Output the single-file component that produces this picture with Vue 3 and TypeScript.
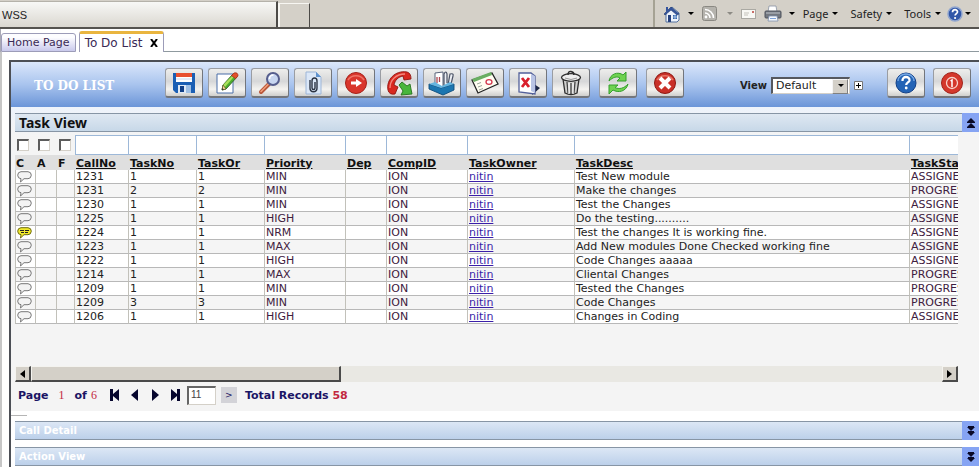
<script setup lang="ts">
import { ref } from 'vue'

interface Column {
  label: string
  width: number
}

interface Task {
  call: number
  task: number
  order: number
  priority: string
  desc: string
  status: string
  noted?: boolean
}

const flags = ['C', 'A', 'F']
const flagWidths = [21, 21, 18]

const columns: Column[] = [
  { label: 'CallNo', width: 54 },
  { label: 'TaskNo', width: 68 },
  { label: 'TaskOr', width: 68 },
  { label: 'Priority', width: 81 },
  { label: 'Dep', width: 41 },
  { label: 'CompID', width: 81 },
  { label: 'TaskOwner', width: 107 },
  { label: 'TaskDesc', width: 335 },
  { label: 'TaskStatus', width: 100 },
]

const tasks: Task[] = [
  { call: 1231, task: 1, order: 1, priority: 'MIN', desc: 'Test New module', status: 'ASSIGNED' },
  { call: 1231, task: 2, order: 2, priority: 'MIN', desc: 'Make the changes', status: 'PROGRESS' },
  { call: 1230, task: 1, order: 1, priority: 'MIN', desc: 'Test the Changes', status: 'ASSIGNED' },
  { call: 1225, task: 1, order: 1, priority: 'HIGH', desc: 'Do the testing..........', status: 'ASSIGNED' },
  { call: 1224, task: 1, order: 1, priority: 'NRM', desc: 'Test the changes It is working fine.', status: 'ASSIGNED', noted: true },
  { call: 1223, task: 1, order: 1, priority: 'MAX', desc: 'Add New modules Done Checked working fine', status: 'ASSIGNED' },
  { call: 1222, task: 1, order: 1, priority: 'HIGH', desc: 'Code Changes aaaaa', status: 'ASSIGNED' },
  { call: 1214, task: 1, order: 1, priority: 'MAX', desc: 'Cliental Changes', status: 'PROGRESS' },
  { call: 1209, task: 1, order: 1, priority: 'MIN', desc: 'Tested the Changes', status: 'PROGRESS' },
  { call: 1209, task: 3, order: 3, priority: 'MIN', desc: 'Code Changes', status: 'PROGRESS' },
  { call: 1206, task: 1, order: 1, priority: 'HIGH', desc: 'Changes in Coding', status: 'ASSIGNED' },
]

const pageSize = ref('11')
</script>

<template>
  <div class="page">
    <header class="chrome">
      <div class="browser-tab">WSS</div>
      <button class="new-tab" aria-label="New tab"></button>
      <nav class="commands">
        <button class="cmd home" aria-label="Home">
          <svg width="18" height="18" viewBox="0 0 18 18">
            <path d="M3 8v9h11l2-2V8L9 2z" fill="#eef3fb" stroke="#52709f" />
            <path d="M1 9l7-7 8 7-2 1-6-5-6 5z" fill="#34549e" stroke="#20396f" stroke-width=".6" />
            <path d="M3 2h2v3l-2 2z" fill="#34549e" />
            <path d="M5 10h3v7H5z" fill="#27427f" />
            <path d="M10 10h4v4h-4z" fill="#3667ad" />
            <path d="M12 10v4M10 12h4" stroke="#cfe0f8" stroke-width=".7" />
          </svg>
          <i class="caret"></i>
        </button>
        <button class="cmd feed" aria-label="Feeds">
          <svg width="15" height="15" viewBox="0 0 15 15">
            <rect x=".5" y=".5" width="14" height="14" rx="2" fill="#b5b3ad" stroke="#8a8882" />
            <circle cx="4" cy="11" r="1.4" fill="#fff" />
            <path d="M3 7a5 5 0 0 1 5 5M3 3.500a8.500 8.500 0 0 1 8.500 8.500" fill="none" stroke="#fff" stroke-width="1.600" />
          </svg>
          <i class="caret dim"></i>
        </button>
        <button class="cmd mail" aria-label="Read mail">
          <svg width="15" height="12" viewBox="0 0 15 12">
            <rect x=".5" y="1.500" width="14" height="9" fill="#f8f8f4" stroke="#aaa9a3" />
            <path d="M3 5h5M3 7h4" stroke="#c4c2bb" />
            <rect x="11" y="3" width="2" height="2" fill="#c96e68" />
          </svg>
        </button>
        <button class="cmd print" aria-label="Print">
          <svg width="18" height="17" viewBox="0 0 18 17">
            <path d="M5 1h7l1 6H4z" fill="#fff" stroke="#8993a3" stroke-width=".8" />
            <rect x="1" y="6" width="16" height="7" rx="1" fill="#737880" stroke="#4e535c" />
            <path d="M2 8h14" stroke="#bfc3ca" />
            <path d="M5 11h8l1 5H4z" fill="#f5f8fd" stroke="#7d8fac" stroke-width=".8" />
            <path d="M6 13.500h6" stroke="#7fa5dc" />
          </svg>
          <i class="caret"></i>
        </button>
        <button class="cmd text">Page <i class="caret"></i></button>
        <button class="cmd text">Safety <i class="caret"></i></button>
        <button class="cmd text">Tools <i class="caret"></i></button>
        <button class="cmd about" aria-label="Help">
          <svg width="16" height="16" viewBox="0 0 16 16">
            <circle cx="8" cy="8" r="7" fill="#3157a8" stroke="#91a6cf" stroke-width="1.500" />
            <path d="M5.500 6.300C5.500 2.800 10.700 3 10.500 6c-.1 1.500-2.400 1.700-2.400 3.600" fill="none" stroke="#fff" stroke-width="1.700" />
            <circle cx="8.100" cy="12" r="1.100" fill="#fff" />
          </svg>
          <i class="caret"></i>
        </button>
      </nav>
    </header>

    <nav class="tabs">
      <a class="tab" href="#home">Home Page</a>
      <div class="tab active">
        <a href="#todo">To Do List</a>
        <button class="tab-close" aria-label="Close tab">
          <svg width="8" height="8" viewBox="0 0 8 8"><path d="M1 0l6 8M7 0L1 8" stroke="#000" stroke-width="2" /></svg>
        </button>
      </div>
      <div class="tab-rest"></div>
    </nav>

    <div class="body">
      <main class="frame">
        <div class="banner">
          <h1>TO DO LIST</h1>
          <div class="tools">
            <button class="tool" aria-label="Save">
              <svg viewBox="0 0 24 24">
                <path d="M1 2h22v20H4l-3-3z" fill="#1b5fb4" />
                <path d="M4 2h16v9H4z" fill="#fff" />
                <path d="M4 2h16v4H4z" fill="#e8502f" />
                <path d="M4 8h16" stroke="#c9d8ee" />
                <path d="M6 14h13v8H6z" fill="#dfe9f5" />
                <path d="M8 15h4v6H8z" fill="#123f86" />
                <path d="M14 14h5v8h-5z" fill="#9fbfe4" />
              </svg>
            </button>
            <button class="tool" aria-label="Edit">
              <svg viewBox="0 0 24 24">
                <path d="M2 3h16v19H2z" fill="#fff" stroke="#4b6ea8" />
                <path d="M7 19l1-5L18 3l4 3-11 12z" fill="#4caf2e" stroke="#2f5f21" stroke-width=".9" />
                <path d="M8 14l11-11 1.500 1L10 16z" fill="#a9df5b" />
                <path d="M16.500 4.500L19 2q4-1 4 3l-2.500 2.700z" fill="#e2502b" stroke="#a33017" stroke-width=".8" />
                <path d="M7 19l1-5 3 4z" fill="#f5d69a" stroke="#5d4a20" stroke-width=".6" />
                <path d="M7 19l.5-2 1.300 1.400z" fill="#222" />
              </svg>
            </button>
            <button class="tool" aria-label="Search">
              <svg viewBox="0 0 24 24">
                <path d="M11 13l-8 8" stroke="#b95639" stroke-width="4" stroke-linecap="round" />
                <path d="M11 12.500l-8 8" stroke="#f2a07c" stroke-width="1.500" stroke-linecap="round" />
                <circle cx="15" cy="8" r="6" fill="#c8d6f0" stroke="#565e8d" stroke-width="2" />
                <path d="M11.500 8a4 4 0 0 1 4-4" fill="none" stroke="#fff" stroke-width="1.600" />
              </svg>
            </button>
            <button class="tool" aria-label="Attach">
              <svg viewBox="0 0 24 24">
                <path d="M5 1h10l5 5v17H5z" fill="#dbe7f7" stroke="#9db6d8" />
                <path d="M15 1v5h5z" fill="#5f93cf" />
                <path d="M9 9v8c0 5 7 5 7 0V10c0-4-5-4-5 0v7c0 2 3 2 3 0v-6" fill="none" stroke="#2b3342" stroke-width="1.400" />
              </svg>
            </button>
            <button class="tool" aria-label="Forward">
              <svg viewBox="0 0 24 24">
                <circle cx="12" cy="12" r="10.500" fill="#d9362c" stroke="#a52119" />
                <path d="M4 9a9 8 0 0 1 16 0" fill="none" stroke="#ef7466" stroke-width="1.500" />
                <path d="M7 10.500h5V8l6 4-6 4v-2.500H7z" fill="#fff" />
              </svg>
            </button>
            <button class="tool" aria-label="Call back">
              <svg viewBox="0 0 24 24">
                <path d="M1 19C-1 9 8-1 20 1q4 1 4 7l-7 1-1-4C11 6 8 9 7 14l4 2-3 7q-6 1-7-4z" fill="#d8291f" stroke="#8f1510" stroke-width=".9" />
                <path d="M3 17C3 9 9 3 18 3" fill="none" stroke="#f5887c" stroke-width="1.300" />
                <path d="M12 14l3-3 5 4 3-2 2 10-11 1 2-4z" fill="#48b63c" stroke="#25731e" stroke-width=".9" />
              </svg>
            </button>
            <button class="tool" aria-label="Documents">
              <svg viewBox="0 0 24 24">
                <path d="M5 2l8-1v15H5z" fill="#fff" stroke="#59647b" />
                <path d="M7 6v6M9.500 6v5" stroke="#b0464f" stroke-width="1.300" />
                <path d="M14 15V3q2-4 3 0v9M18 14l2-11q4-1 3 2l-2 8" fill="#eceff4" stroke="#4b5366" stroke-width="1.200" />
                <path d="M-1 13l12 4 13-4v6l-11 5-14-6z" fill="#1c76b0" stroke="#104d7c" stroke-width=".9" />
                <path d="M-1 13l6-2 7 4 8-4 4 2-13 4z" fill="#67b5df" />
              </svg>
            </button>
            <button class="tool" aria-label="Card">
              <svg viewBox="0 0 24 24">
                <path d="M-1 9L19 2l6 11L5 22z" fill="#fffef2" stroke="#222" stroke-width="1.300" />
                <path d="M-1 8L18 1l1 3L1 11z" fill="#69ae62" />
                <path d="M4 13l4-1.500M5 16l4-1.500M6 19l4-1.500" stroke="#9aa39a" />
                <ellipse cx="16" cy="11" rx="3" ry="2.300" fill="#fff" stroke="#d3384d" stroke-width="1.300" />
              </svg>
            </button>
            <button class="tool" aria-label="Delete page">
              <svg viewBox="0 0 24 24">
                <path d="M18 13l6 4-8 7z" fill="#1d2745" />
                <path d="M3 2h12l4 3v18L3 21z" fill="#fff" stroke="#53609a" stroke-width="1.300" />
                <path d="M15 3l4 2v17l-4-2z" fill="#b9c4e5" />
                <path d="M6 7l7 9M13 7L6 16" stroke="#d91f2c" stroke-width="2.800" />
              </svg>
            </button>
            <button class="tool" aria-label="Trash">
              <svg viewBox="0 0 24 24">
                <path d="M4 8l2 14q6 3 12 0l2-14z" fill="#d0d0ce" stroke="#2e2e2e" stroke-width="1.300" />
                <path d="M8 11l1 11M12 12v11M16 11l-1 11" stroke="#444" stroke-width="1.300" />
                <path d="M10 12v11M14 12v11" stroke="#fff" />
                <ellipse cx="12" cy="6.500" rx="9.500" ry="3.800" fill="#eee" stroke="#2e2e2e" stroke-width="1.300" />
                <path d="M6 7q6 3 12 0" fill="none" stroke="#999" />
                <path d="M9 4q0-4 3-3.500T15 4" fill="none" stroke="#2e2e2e" stroke-width="1.500" />
              </svg>
            </button>
            <button class="tool wide" aria-label="Refresh">
              <svg viewBox="0 0 24 24">
                <path d="M3 10C4 3 12 0 17 4l3-3v9h-9l3-3c-3-2-7-1-11 3z" fill="#6fd251" stroke="#349f2d" />
                <path d="M22 13c-2 8-10 9-15 6l-4 4v-9h9l-3 2.500c4 2 9 1 13-3.500z" fill="#6fd251" stroke="#349f2d" />
              </svg>
            </button>
            <button class="tool wide" aria-label="Close">
              <svg viewBox="0 0 24 24">
                <circle cx="12" cy="12" r="10.500" fill="#c93028" stroke="#8e1913" />
                <path d="M4 9a9 8 0 0 1 16 0" fill="none" stroke="#e87466" stroke-width="1.500" />
                <path d="M7 7l10 10M17 7L7 17" stroke="#fff" stroke-width="4" />
              </svg>
            </button>
          </div>
          <div class="view">
            <label for="view">View</label>
            <span class="select-box">
              <select id="view"><option>Default</option></select>
            </span>
            <button class="plus" aria-label="Add view">
              <svg width="9" height="9" viewBox="0 0 9 9"><path d="M.5.5h8v8h-8z" fill="#fff" stroke="#777" /><path d="M2 4.500h5M4.500 2v5" stroke="#000" /></svg>
            </button>
          </div>
          <div class="session">
            <button class="tool" aria-label="Help">
              <svg viewBox="0 0 24 24">
                <circle cx="12" cy="12" r="10" fill="#2464b6" stroke="#133f85" />
                <path d="M4 10a8 7 0 0 1 16 0" fill="none" stroke="#76a8e4" stroke-width="1.500" />
                <path d="M8.500 10C8 4.500 16 5 15.500 9.500c-.3 2-3.300 2-3.300 4.500" fill="none" stroke="#fff" stroke-width="2.300" />
                <circle cx="12.200" cy="17" r="1.400" fill="#fff" />
              </svg>
            </button>
            <button class="tool" aria-label="Log out">
              <svg viewBox="0 0 24 24">
                <circle cx="12" cy="12" r="10.500" fill="#d4382c" stroke="#a0241b" />
                <circle cx="12" cy="12" r="5.500" fill="none" stroke="#f8d4cc" stroke-width="1.300" />
                <path d="M10.500 10l1.500-1v7" fill="none" stroke="#fff" stroke-width="1.500" />
              </svg>
            </button>
          </div>
        </div>

        <section class="task-view">
          <div class="bar">
            <h2>Task View</h2>
            <button class="toggle" aria-label="Collapse Task View">
              <svg width="8" height="10" viewBox="0 0 8 10"><path d="M4 0l4 4v1H0V4zM4 5l4 4v1H0V9z" fill="#0a0a28" /></svg>
            </button>
          </div>

          <div class="panel">
            <div class="grid">
              <table>
                <colgroup>
                  <col v-for="(w, i) in flagWidths" :key="'f' + i" :style="{ width: w + 'px' }" />
                  <col v-for="c in columns" :key="c.label" :style="{ width: c.width + 'px' }" />
                </colgroup>
                <thead>
                  <tr class="filters">
                    <td v-for="f in flags" :key="f" class="flag"><input type="checkbox" :aria-label="'Filter ' + f" /></td>
                    <td v-for="c in columns" :key="c.label"><input type="text" :aria-label="'Filter ' + c.label" /></td>
                  </tr>
                  <tr class="heads">
                    <th v-for="f in flags" :key="f" scope="col">{{ f }}</th>
                    <th v-for="c in columns" :key="c.label" scope="col"><a href="#sort">{{ c.label }}</a></th>
                  </tr>
                </thead>
                <tbody>
                  <tr v-for="(t, i) in tasks" :key="i">
                    <td class="mark">
                      <svg class="bubble" :class="{ noted: t.noted }" width="15" height="12" viewBox="0 0 15 12">
                        <path d="M4 .7h7Q14.300 1 14.300 4.200 14 7.700 11 7.700H7L3.500 11l.5-3.300Q.7 7.500.7 4.200.7 1 4 .7z" />
                        <path v-if="t.noted" class="lines" d="M3 3.500h4M8 3.500h4M4 5.500h3M8 5.500h3" />
                      </svg>
                    </td>
                    <td></td>
                    <td></td>
                    <td>{{ t.call }}</td>
                    <td>{{ t.task }}</td>
                    <td>{{ t.order }}</td>
                    <td class="plum">{{ t.priority }}</td>
                    <td></td>
                    <td class="plum">ION</td>
                    <td><a class="owner" href="#nitin">nitin</a></td>
                    <td>{{ t.desc }}</td>
                    <td class="plum">{{ t.status }}</td>
                  </tr>
                </tbody>
              </table>
            </div>

            <div class="scroller">
              <button class="arrow" aria-label="Scroll left"><svg width="5" height="8" viewBox="0 0 5 8"><path d="M5 0v8L0 4z" /></svg></button>
              <div class="track"><div class="thumb"></div></div>
              <button class="arrow" aria-label="Scroll right"><svg width="5" height="8" viewBox="0 0 5 8"><path d="M0 0v8l5-4z" /></svg></button>
            </div>

            <div class="pager">
              <span class="page-label">Page</span>
              <span class="num">1</span>
              <span class="of">of</span>
              <span class="num last">6</span>
              <div class="moves">
                <button aria-label="First page"><svg viewBox="0 0 10 12"><path d="M0 0h3v5l6-5v12L3 7v5H0z" /></svg></button>
                <button aria-label="Previous page"><svg viewBox="0 0 10 12"><path d="M8 0v12L1 6z" /></svg></button>
                <button aria-label="Next page"><svg viewBox="0 0 10 12"><path d="M2 0v12l7-6z" /></svg></button>
                <button aria-label="Last page"><svg viewBox="0 0 10 12"><path d="M10 0H7v5L1 0v12l6-5v5h3z" /></svg></button>
              </div>
              <input v-model="pageSize" class="size" type="text" aria-label="Records per page" />
              <button class="go">&gt;</button>
              <span class="total">Total Records <b>58</b></span>
            </div>
          </div>
        </section>

        <hr class="stub" />

        <section class="bar closed">
          <h2>Call Detail</h2>
          <button class="toggle" aria-label="Expand Call Detail">
            <svg width="8" height="10" viewBox="0 0 8 10"><path d="M1 0h6v1h1L4 5 0 1h1zM1 5h6v1h1l-4 4-4-4h1z" fill="#0a0a28" /></svg>
          </button>
        </section>
        <section class="bar closed">
          <h2>Action View</h2>
          <button class="toggle" aria-label="Expand Action View">
            <svg width="8" height="10" viewBox="0 0 8 10"><path d="M1 0h6v1h1L4 5 0 1h1zM1 5h6v1h1l-4 4-4-4h1z" fill="#0a0a28" /></svg>
          </button>
        </section>
      </main>
    </div>
  </div>
</template>

<style>
body {
  background: #fff;
  overflow: hidden;
}
</style>

<style scoped>
.page {
  display: flex;
  flex-direction: column;
  height: 100vh;
  overflow: hidden;
  font-family: 'DejaVu Sans', Verdana, sans-serif;
  font-size: 11px;
  color: #222;
}
.page * {
  box-sizing: border-box;
}
button {
  padding: 0;
  border: 0;
  background: none;
  font: inherit;
  color: inherit;
}
h1,
h2 {
  margin: 0;
}
svg {
  display: block;
  flex: none;
}

/* browser chrome */
.chrome {
  display: flex;
  flex: none;
  height: 29px;
  background: #d4d0c8;
  border-bottom: 2px solid #55534f;
  font-family: 'Liberation Sans', Arial, sans-serif;
}
.browser-tab {
  flex: none;
  width: 278px;
  margin-top: 1px;
  padding-left: 2px;
  line-height: 27px;
  background: linear-gradient(#f8f8f6, #dad7d0);
  border-top: 1px solid #b5b2aa;
  border-right: 2px solid #4c4a47;
}
.new-tab {
  width: 32px;
  margin-top: 3px;
  border-top: 1px solid #f7f6f2;
  border-left: 2px solid #f7f6f2;
  border-right: 1px solid #4c4a47;
}
.commands {
  display: flex;
  align-items: center;
  margin-left: auto;
  padding: 0 8px;
  border-left: 2px solid #a5a294;
  font-family: 'Noto Sans', Tahoma, sans-serif;
}
.cmd {
  display: flex;
  align-items: center;
}
.home,
.feed,
.print {
  gap: 7px;
  margin-right: 8px;
}
.feed {
  gap: 10px;
}
.mail {
  margin-right: 8px;
}
.text {
  gap: 4px;
  margin-right: 12px;
}
.text:nth-last-child(2) {
  margin-right: 6px;
}
.about {
  gap: 2px;
}
.caret {
  border: 3px solid transparent;
  border-top-color: #000;
  border-bottom: 0;
}
.caret.dim {
  border-top-color: #8c8a84;
}

/* application tabs */
.tabs {
  display: flex;
  flex: none;
  align-items: flex-end;
  height: 23px;
  border-left: 1px solid #a9a9b5;
}
.tabs a {
  color: #3a2a55;
  text-decoration: none;
}
.tab {
  height: 19px;
  padding: 0 5px;
  line-height: 18px;
  background: linear-gradient(#fdfdff 20%, #c9c9ec);
  border: 1px solid #9c9cb8;
  border-radius: 3px 3px 0 0;
}
.tab.active {
  display: flex;
  align-items: center;
  gap: 8px;
  height: 21px;
  margin-left: 3px;
  padding: 0 5px;
  background: #fff;
  border-top: 3px solid #e9b53f;
  border-bottom: 0;
  font-size: 12px;
}
.tab-rest {
  flex: 1;
  height: 1px;
  background: #8f9a9f;
}

/* main frame */
.body {
  display: flex;
  flex: 1;
  min-height: 0;
  padding: 8px 0 0 7px;
  border-left: 2px solid #c6c6c6;
}
.frame {
  flex: 1;
  min-width: 0;
  border-top: 2px solid #4c4f55;
  border-left: 2px solid #4c4f55;
}
.banner {
  display: flex;
  align-items: center;
  height: 45px;
  padding: 0 8px 3px 23px;
  background: linear-gradient(#dbe7fb, #a9c4ee 50%, #6b95d8);
}
h1 {
  flex: none;
  width: 131px;
  padding-top: 6px;
  font: bold 12px 'DejaVu Serif', serif;
  color: #fff;
}
.tools {
  display: flex;
  gap: 5px;
}
.tool {
  display: flex;
  align-items: center;
  justify-content: center;
  width: 38px;
  height: 30px;
  background: linear-gradient(#eeeeec, #d6d7d8 45%, #f4f3f0 75%, #cfcfcd);
  border: 1px solid #9a9da3;
  border-right-color: #73767c;
  border-bottom: 2px solid #73767c;
  border-radius: 3px;
}
.tool svg {
  width: 24px;
  height: 24px;
  overflow: visible;
}
.tool.wide {
  margin-left: 4px;
}
.view {
  display: flex;
  align-items: center;
  gap: 4px;
  margin: 5px 24px 0 auto;
}
.view label {
  font-weight: bold;
  font-size: 10px;
}
.select-box {
  position: relative;
  display: block;
}
.select-box::before {
  content: '';
  position: absolute;
  right: 2px;
  top: 2px;
  width: 14px;
  height: 13px;
  background: #d4d0c8;
  border: 1px solid #808080;
  border-top-color: #f5f5f5;
  border-left-color: #f5f5f5;
  pointer-events: none;
}
.select-box::after {
  content: '';
  position: absolute;
  right: 6px;
  top: 7px;
  border: 3px solid transparent;
  border-top-color: #000;
  border-bottom: 0;
  pointer-events: none;
}
select {
  display: block;
  appearance: none;
  width: 79px;
  height: 17px;
  padding: 0 3px;
  background: #fff;
  border: 1px solid #d4d0c8;
  border-top: 2px solid #55585e;
  border-left: 2px solid #55585e;
  border-radius: 0;
  font: 11px/14px 'DejaVu Sans', Verdana, sans-serif;
  color: #222;
}
.session {
  display: flex;
  gap: 8px;
}

/* section bars */
.bar {
  display: flex;
  height: 19px;
  background: linear-gradient(#dfe8f2, #c7d8e8);
  border-top: 1px solid #8795a5;
  border-bottom: 1px solid #8795a5;
}
.bar h2 {
  flex: 1;
  padding-left: 4px;
  font: bold 14px/17px 'Noto Sans', 'Trebuchet MS', sans-serif;
  color: #111;
}
.toggle {
  display: flex;
  align-items: center;
  justify-content: center;
  width: 17px;
  height: 19px;
  margin: -1px 0;
  background: #86a4f3;
}
.bar.closed {
  margin: 0 0 7px 4px;
  background: linear-gradient(#dce7f5, #bcd0ea);
}
.bar.closed h2 {
  font: bold 10px/17px 'DejaVu Sans', Verdana, sans-serif;
  color: #fff;
}
.task-view {
  padding: 6px 0 0 4px;
  background: linear-gradient(#eef3fb, #f4f4f4 30px);
}

/* task grid */
.panel {
  padding-top: 3px;
}
.grid {
  height: 231px;
  margin-right: 21px;
  overflow: hidden;
}
table {
  table-layout: fixed;
  width: 995px;
  border-collapse: separate;
  border-spacing: 0;
}
td,
th {
  height: 14px;
  padding: 0;
  overflow: hidden;
  line-height: 13px;
  text-align: left;
  white-space: nowrap;
}
.filters td {
  height: 20px;
}
.filters input[type='text'] {
  display: block;
  width: 100%;
  height: 20px;
  background: #fff;
  border: 1px solid #9db8d8;
  border-left: 0;
  border-radius: 0;
}
.filters td:nth-child(4) input {
  border-left: 1px solid #9db8d8;
}
.filters input[type='checkbox'] {
  display: block;
  appearance: none;
  width: 12px;
  height: 12px;
  margin: 0 0 0 2px;
  background: #fff;
  border: 1px solid #d4d0c8;
  border-top: 2px solid #5c5c5c;
  border-left: 2px solid #5c5c5c;
}
.heads th {
  height: 15px;
  padding: 1px 0 0 1px;
  background: #dfdfdf;
  font-weight: bold;
  color: #111;
}
.heads a {
  color: inherit;
}
tbody td {
  padding: 1px 0 0 1px;
  line-height: 12px;
  background: #fff;
  border-right: 1px solid #c2c1ba;
  border-bottom: 1px solid #b8b8b8;
}
tbody td:first-child {
  border-left: 1px solid #c2c1ba;
}
tbody .mark {
  padding-top: 0;
}
tbody tr:nth-child(even) td {
  background: #f5f5f5;
}
.plum {
  color: #402040;
}
.owner {
  color: #3a1fa8;
}
.bubble path {
  fill: #f3f3f3;
  stroke: #777;
}
.bubble.noted path {
  fill: #f2ea2c;
  stroke: #6d6a10;
}
.bubble.noted .lines {
  fill: none;
  stroke: #222;
}

/* horizontal scroller */
.scroller {
  display: flex;
  height: 16px;
  margin-right: 21px;
}
.arrow {
  display: flex;
  align-items: center;
  justify-content: center;
  width: 16px;
}
.arrow,
.thumb {
  background: #d4d0c8;
  border: 1px solid #f4f3ef;
  border-right: 2px solid #4a4a4a;
  border-bottom: 2px solid #4a4a4a;
}
.track {
  flex: 1;
  background: #e9e8e3;
}
.thumb {
  width: 34%;
  height: 16px;
}

/* pager */
.pager {
  display: flex;
  align-items: center;
  height: 29px;
  padding: 0 0 3px 3px;
  font-weight: bold;
  color: #1b1464;
}
.num {
  width: 26px;
  font: 12px 'Liberation Serif', serif;
  color: #c2283f;
  text-align: center;
}
.num.last {
  width: 14px;
}
.moves {
  display: flex;
  gap: 10px;
  margin: 0 7px 0 9px;
}
.moves svg {
  width: 10px;
  height: 12px;
  fill: #06062e;
}
.size {
  width: 29px;
  height: 19px;
  padding: 0 2px 3px;
  background: #fff;
  border: 1px solid #d4d0c8;
  border-top: 2px solid #666;
  border-left: 2px solid #666;
  border-radius: 0;
  font: 10px 'Liberation Sans', Arial, sans-serif;
  color: #444;
}
.go {
  width: 16px;
  height: 16px;
  margin: 0 8px 0 5px;
  background: #d3d3d8;
  font: 9px 'DejaVu Sans', Verdana, sans-serif;
}
.total b {
  color: #c2283f;
}
.stub {
  width: 16px;
  height: 1px;
  margin: 4px 0 5px;
  border: 0;
  background: #b5b5b5;
}
</style>
